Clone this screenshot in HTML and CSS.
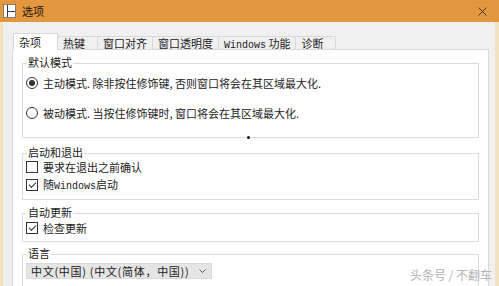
FILE: index.html
```html
<!DOCTYPE html>
<html lang="zh-CN">
<head>
    <meta charset="UTF-8">
    <title>选项</title>
    <link rel="stylesheet" href="styles.css">
</head>
<body>

    <div class="titlebar">
        <svg class="app-icon" width="13" height="14" viewBox="0 0 13 14">
            <rect x="0.5" y="0.5" width="12" height="13" fill="#ffffff" stroke="#8a7a66"/>
            <line x1="4.5" y1="1" x2="4.5" y2="13" stroke="#3a3a3a"/>
            <line x1="5" y1="7.5" x2="12" y2="7.5" stroke="#3a3a3a"/>
        </svg>
        <span class="title">选项</span>
        <svg class="close" width="9" height="9" viewBox="0 0 9 9">
            <path d="M0.5 0.5 L8.5 8.5 M8.5 0.5 L0.5 8.5" stroke="#4a3220" stroke-width="1"/>
        </svg>
    </div>

    <div class="window">
        <div class="tabs">
            <div class="tab active">杂项</div>
            <div class="tab">热键</div>
            <div class="tab">窗口对齐</div>
            <div class="tab">窗口透明度</div>
            <div class="tab"><span class="latin">Windows</span> 功能</div>
            <div class="tab">诊断</div>
        </div>

        <div class="panel">
            <fieldset class="group group-mode">
                <legend>默认模式</legend>
                <div class="option"><span class="radio checked"></span><span>主动模式. 除非按住修饰键, 否则窗口将会在其区域最大化.</span></div>
                <div class="option"><span class="radio"></span><span>被动模式. 当按住修饰键时, 窗口将会在其区域最大化.</span></div>
            </fieldset>

            <fieldset class="group group-start">
                <legend>启动和退出</legend>
                <div class="option"><span class="check"></span><span>要求在退出之前确认</span></div>
                <div class="option"><span class="check checked"></span><span>随<span class="latin">Windows</span>启动</span></div>
            </fieldset>

            <fieldset class="group group-update">
                <legend>自动更新</legend>
                <div class="option"><span class="check checked"></span><span>检查更新</span></div>
            </fieldset>

            <fieldset class="group group-lang">
                <legend>语言</legend>
                <div class="select">
                    <span class="select-text">中文(中国) (中文(简体，中国))</span>
                    <svg width="7" height="4" viewBox="0 0 7 4"><path d="M0.5 0.5 L3.5 3.5 L6.5 0.5" fill="none" stroke="#555"/></svg>
                </div>
            </fieldset>
        </div>
    </div>

    <span class="cursor-dot"></span>
    <span class="watermark">头条号 / 不翻车</span>

</body>
</html>
```

FILE: styles.css
```css
body {
    margin: 0;
    width: 499px;
    height: 286px;
    overflow: hidden;
    position: relative;
    font-family: "Noto Sans CJK SC", "Noto Sans", sans-serif;
    font-size: 11px;
    color: #222222;
    background: #f0f0f0;
}

.titlebar {
    height: 22px;
    display: flex;
    align-items: center;
    padding-left: 3px;
    background: #e3973f;
}

.app-icon {
    display: block;
}

.title {
    margin-left: 6px;
    font-size: 11px;
    line-height: 12px;
    color: #1a1208;
}

.close {
    display: block;
    margin-left: auto;
    margin-right: 12px;
}

.window {
    height: 264px;
    display: flex;
    flex-direction: column;
    border-left: 3px solid #f3e2c0;
    border-right: 4px solid #f3e2c0;
    padding: 11px 6px 0 9px;
    box-sizing: border-box;
}

/* onglets */
.tabs {
    display: flex;
    align-items: flex-end;
    margin-left: 1px;
    position: relative;
    z-index: 1;
}

.tab {
    height: 13px;
    min-width: 41px;
    box-sizing: border-box;
    padding: 0 5px;
    margin-left: -1px;
    border: 1px solid #d9d9d9;
    border-bottom: none;
    line-height: 12px;
    white-space: nowrap;
    background: #f0f0f0;
}

.tab.active {
    height: 17px;
    width: 45px;
    margin-left: 0;
    margin-bottom: -1px;
    padding-top: 2px;
    background: #ffffff;
}

.latin {
    font-family: "Liberation Mono", monospace;
    font-size: 10px;
}

.panel {
    flex: 1;
    overflow: hidden;
    background: #ffffff;
    border: 1px solid #d9d9d9;
    border-bottom: none;
    padding-top: 6px;
}

/* cadres */
.group {
    margin: 0 9px;
    border: 1px solid #dcdcdc;
    min-width: 0;
}

.group legend {
    margin-left: 1px;
    padding: 0 1px 2px;
    line-height: 12px;
}

.group-mode {
    padding: 5px 3px 16px;
}

.group-mode .option + .option {
    margin-top: 14px;
}

.group-start {
    margin-top: 8px;
    padding: 0 3px 7px;
}

.group-start .option {
    height: 14px;
}

.group-start .option + .option {
    margin-top: 4px;
}

.group-update {
    margin-top: 6px;
    padding: 1px 3px 6px;
}

.group-update .option {
    height: 14px;
}

.group-lang {
    margin-top: 5px;
    padding: 2px 3px 10px;
}

.option {
    display: flex;
    align-items: center;
    height: 16px;
    line-height: 12px;
    white-space: nowrap;
}

.radio,
.check {
    width: 12px;
    height: 12px;
    box-sizing: border-box;
    border: 1px solid #333333;
    background: #ffffff;
    margin-right: 5px;
    flex-shrink: 0;
    display: flex;
    align-items: center;
    justify-content: center;
}

.radio {
    border-radius: 50%;
}

.radio.checked::after {
    content: "";
    width: 6px;
    height: 6px;
    border-radius: 50%;
    background: #333333;
}

.check.checked::after {
    content: "";
    width: 6px;
    height: 3px;
    border-left: 1px solid #333333;
    border-bottom: 1px solid #333333;
    transform: translateY(-1px) rotate(-45deg);
}

.select {
    width: 186px;
    height: 16px;
    box-sizing: border-box;
    display: flex;
    align-items: center;
    justify-content: space-between;
    padding: 0 5px 0 4px;
    background: #e5e5e5;
    border: 1px solid #dadada;
    line-height: 12px;
    white-space: nowrap;
}

.select-text {
    letter-spacing: 0.7px;
}

.select svg {
    display: block;
}

.cursor-dot {
    position: absolute;
    left: 247px;
    top: 136px;
    width: 3px;
    height: 3px;
    border-radius: 50%;
    background: #111111;
}

.watermark {
    position: absolute;
    right: 7px;
    bottom: 4px;
    font-size: 12px;
    line-height: 14px;
    color: #b4b4b4;
}
```
